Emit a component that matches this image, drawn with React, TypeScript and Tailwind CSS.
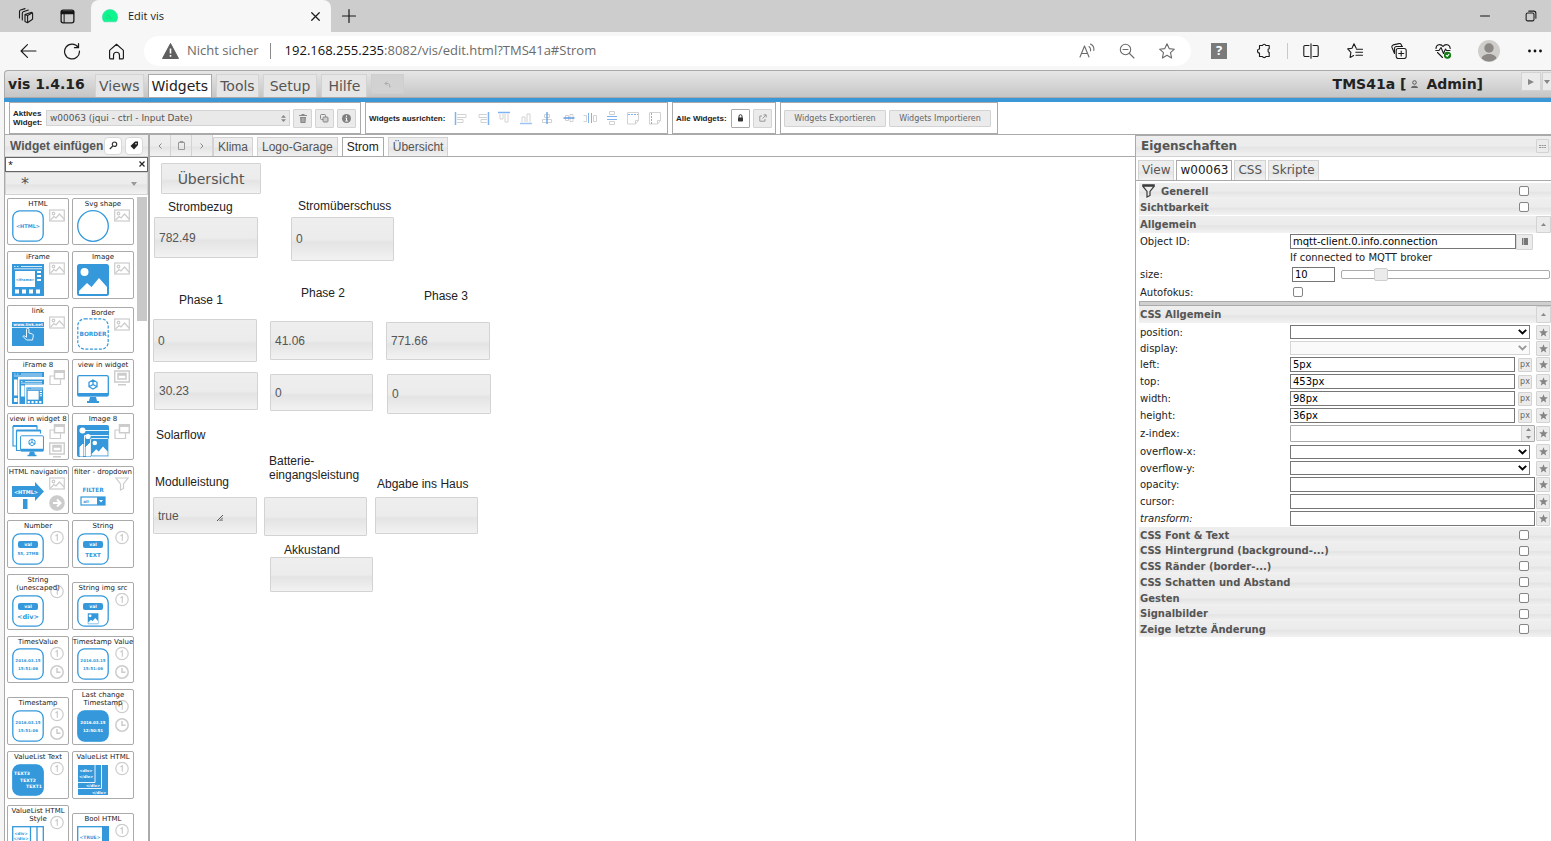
import type { ReactNode } from 'react';
import clsx from 'clsx';

const VERDANA = "font-['DejaVu_Sans',Verdana,sans-serif]";
const ARIAL = "font-['Liberation_Sans',Arial,sans-serif]";
const GLASS = 'bg-[linear-gradient(to_bottom,#eeeeee_0%,#ececec_50%,#e4e4e4_58%,#f2f2f2_100%)]';
const BLUE = '#3498db';
const GREY = '#cccccc';

/* ---------- browser chrome ---------- */

function Ico({ children, size = 16, className, stroke = '#1b1b1b', w = 1.1 }: {
  children: ReactNode; size?: number; className?: string; stroke?: string; w?: number;
}) {
  return (
    <svg width={size} height={size} viewBox="0 0 16 16" fill="none" stroke={stroke} strokeWidth={w}
      strokeLinecap="round" strokeLinejoin="round" className={clsx('shrink-0', className)} aria-hidden="true">
      {children}
    </svg>
  );
}

function IconButton({ label, className, children }: { label: string; className?: string; children: ReactNode }) {
  return (
    <button type="button" aria-label={label} className={clsx('flex shrink-0 items-center justify-center', className)}>
      {children}
    </button>
  );
}

function TabStrip() {
  return (
    <header className="flex h-8 items-stretch bg-[#cdcdcd]">
      <div className="flex w-[91px] items-center pl-[18px]">
        <IconButton label="Workspaces">
          <Ico>
            <path d="M7 6.500l5.700-2a1.200 1.200 0 0 1 1.900.9v5.200a1.500 1.500 0 0 1-.8 1.200l-4.300 3-2.500-1.200zM7 6.500l2.600 1v7M9.600 7.500l4.800-2.700" />
            <path d="M4.300 12V5.200a1.500 1.500 0 0 1 1-1.400l5-1.700M1.500 10V3.400A1.500 1.500 0 0 1 2.500 2l4.500-1.400" />
          </Ico>
        </IconButton>
        <IconButton label="Tab actions" className="ml-[26px]">
          <Ico size={15}>
            <rect x="1.200" y="1.200" width="13.600" height="13.600" rx="2.200" strokeWidth="1.400" />
            <path d="M1.500 2.500h13v2.600h-13z" fill="#111" stroke="#111" />
            <path d="M4.400 5v9.500" />
          </Ico>
        </IconButton>
      </div>
      <div className="flex w-[240px] items-center rounded-t-lg bg-[#f7f7f7] pl-[11px] pr-[10px]">
        <svg width="16" height="14" viewBox="0 0 16 14" aria-hidden="true">
          <path d="M2 12.800h12a7.600 7.600 0 1 0-12 0z" fill="#0df58d" stroke="#3fd6b0" strokeWidth=".6" />
          <path d="M5.500 5.500l4 4.500M4 8l2 2" stroke="#2cc58c" />
        </svg>
        <span className="ml-[10px] text-[11px] text-[#1b1b1b]">Edit vis</span>
        <IconButton label="Close tab" className="ml-auto">
          <Ico size={11} w={1.800}><path d="M2.500 2.500l11 11M13.500 2.500l-11 11" /></Ico>
        </IconButton>
      </div>
      <IconButton label="New tab" className="ml-[10px]">
        <Ico w={1.200}><path d="M8 1.500v13M1.500 8h13" /></Ico>
      </IconButton>
      <IconButton label="Minimize" className="ml-auto">
        <Ico size={12} w={1.400}><path d="M1.500 8h13" strokeLinecap="butt" /></Ico>
      </IconButton>
      <IconButton label="Restore" className="ml-[34px] mr-[14px]">
        <Ico size={12} w={1.400}>
          <rect x="1.500" y="4" width="10.500" height="10.500" rx="2" />
          <path d="M5 1.500h6.500a3 3 0 0 1 3 3V11" />
        </Ico>
      </IconButton>
    </header>
  );
}

function AddressBar() {
  return (
    <div className="flex h-[38px] items-center bg-[#f7f7f7] pl-5 pr-2">
      <IconButton label="Back"><Ico size={17}><path d="M15 7.500H1M7 1.500l-6 6 6 6" /></Ico></IconButton>
      <IconButton label="Reload" className="ml-[26px]">
        <Ico size={18}><path d="M13.500 4.800A6.600 6.600 0 1 0 14.600 8M13.800 1.500v3.600h-3.600" /></Ico>
      </IconButton>
      <IconButton label="Home" className="ml-[27px]">
        <Ico size={17}><path d="M1.500 7L8 1.200 14.500 7v7a1 1 0 0 1-1 1h-2.700v-3.500a2.800 2.800 0 0 0-5.600 0V15H2.500a1 1 0 0 1-1-1z" /></Ico>
      </IconButton>
      <div className="ml-[19px] flex h-[30px] min-w-0 flex-1 items-center rounded-full bg-white pl-[18px] pr-4">
        <svg width="17" height="16" viewBox="0 0 17 16" aria-hidden="true">
          <path d="M8.500.5L16.500 15.500H.5z" fill="#5f5f5f" stroke="#5f5f5f" strokeLinejoin="round" />
          <path d="M8.500 5.500v5M8.500 12v1.700" stroke="#fff" strokeWidth="1.600" />
        </svg>
        <span className="ml-2 whitespace-nowrap text-[13px] text-[#6b6b6b]">Nicht sicher</span>
        <span className="ml-[11px] mr-[14px] h-4 w-px bg-[#8a8a8a]" />
        <span className="whitespace-nowrap text-[13px] text-[#111]">
          192.168.255.235<span className="text-[#6b6b6b]">:8082/vis/edit.html?TMS41a#Strom</span>
        </span>
        <div className="ml-auto flex items-center gap-6">
          <IconButton label="Read aloud">
            <Ico stroke="#6b6b6b">
              <path d="M1 14L5.500 3 10 14M2.600 10.500h5.800M10 3.500q2 1.500 1.500 4.500M11.500 1q4 2 3.300 6.500" />
            </Ico>
          </IconButton>
          <IconButton label="Zoom out">
            <Ico stroke="#6b6b6b"><circle cx="6.500" cy="6.500" r="5.200" /><path d="M4 6.500h5M10.500 10.500L15 15" /></Ico>
          </IconButton>
          <IconButton label="Favourite">
            <Ico stroke="#6b6b6b"><path d="M8 .8l2.200 4.800 5.200.6-3.900 3.500 1.100 5.200L8 12.300l-4.600 2.600 1.100-5.200L.6 6.200l5.200-.6z" /></Ico>
          </IconButton>
        </div>
      </div>
      <IconButton label="Help" className="ml-5 size-4 bg-[#7a7a7a] text-[13px] font-bold text-white">?</IconButton>
      <IconButton label="Extensions" className="ml-[29px]">
        <Ico><path d="M3.500 2.500h3a1.800 1.800 0 0 1 3.400 0h3.300v3.200a1.200 1.200 0 0 0-1 1.800 1.200 1.200 0 0 0 1 1.800v4.200H10a2 2 0 0 1-3.600 0H3.500V10A2 2 0 0 1 3.500 6z" /></Ico>
      </IconButton>
      <span className="ml-[15px] h-4 w-px bg-[#c9c9c9]" />
      <IconButton label="Split screen" className="ml-[15px]">
        <Ico><path d="M6 2.500H2a1.200 1.200 0 0 0-1.200 1.200v8.600A1.200 1.200 0 0 0 2 13.500h4M10 2.500h4a1.200 1.200 0 0 1 1.200 1.200v8.600a1.200 1.200 0 0 1-1.200 1.200h-4M8 .8v14.400" /></Ico>
      </IconButton>
      <IconButton label="Favourites" className="ml-7">
        <Ico><path d="M9.200 5.200L7 .8 5 5.200.7 5.900l3.200 3.500-.8 5 3.500-1.900M9.500 6.300h6M8.800 9.300h6.700M9 12.300h6.500" /></Ico>
      </IconButton>
      <IconButton label="Collections" className="ml-7">
        <Ico>
          <rect x="5.200" y="5.500" width="10" height="10" rx="2" />
          <path d="M10.200 8v5M7.700 10.500h5M3.500 10.500L1 4.500a2 2 0 0 1 1.200-2.600L8 .6a2 2 0 0 1 2.300 1.200l.5 1.200M3.500 10V5.500a2 2 0 0 1 2-2h6" />
        </Ico>
      </IconButton>
      <IconButton label="Browser essentials" className="ml-7">
        <Ico>
          <path d="M1 5.500C1 1 6 .5 8 3.500c2-3 7-2.500 7.200 2M2.500 9.500l5 5M.8 7.500H4l2-3 2.500 6 2-4.500 1 1.500h3.500" />
          <circle cx="12.500" cy="12.300" r="3" fill="#107c10" stroke="#107c10" />
          <path d="M11.200 12.400l1 1 1.700-2" stroke="#fff" />
        </Ico>
      </IconButton>
      <IconButton label="Profile" className="ml-[27px]">
        <svg width="22" height="22" viewBox="0 0 22 22" aria-hidden="true">
          <circle cx="11" cy="11" r="11" fill="#d0cecb" />
          <circle cx="11" cy="8" r="4.700" fill="#8b8885" />
          <path d="M3.500 18.500c1-6 14-6 15 0a11 11 0 0 1-15 0z" fill="#8b8885" />
        </svg>
      </IconButton>
      <IconButton label="More" className="ml-[27px]">
        <svg width="16" height="16" viewBox="0 0 16 16" fill="#111" aria-hidden="true">
          <circle cx="2.500" cy="8" r="1.400" /><circle cx="8" cy="8" r="1.400" /><circle cx="13.500" cy="8" r="1.400" />
        </svg>
      </IconButton>
    </div>
  );
}

/* ---------- editor menu ---------- */

function MenuTab({ children, active, wide }: { children: ReactNode; active?: boolean; wide?: boolean }) {
  return (
    <button type="button" className={clsx('h-[23px] whitespace-nowrap border border-b-0 text-[14px] leading-[20px]',
      wide ? 'px-[6px]' : 'px-[3px]',
      active ? 'border-[#aaa] bg-white text-[#212121]' : 'border-[#d3d3d3] bg-[#e6e6e6] text-[#555]')}>
      {children}
    </button>
  );
}

function MenuBar() {
  return (
    <nav className={clsx(VERDANA, 'flex h-7 items-end rounded-tl border border-b-[#aaa] border-l-[#aaa] border-r-0 border-t-[#aaa] bg-[linear-gradient(to_bottom,#e6e6e6,#c6c6c6)]')}>
      <span className="w-[90px] shrink-0 self-center pl-[3px] text-[14px] font-bold text-[#222]">vis 1.4.16</span>
      <div className="flex gap-1">
        <MenuTab>Views</MenuTab>
        <MenuTab active>Widgets</MenuTab>
        <MenuTab>Tools</MenuTab>
        <MenuTab wide>Setup</MenuTab>
        <MenuTab wide>Hilfe</MenuTab>
        <button type="button" aria-label="Undo" className="mb-[3px] flex h-5 w-[33px] items-center justify-center self-end border border-[#cfcfcf] bg-[#d2d2d2]">
          <svg width="7" height="7" viewBox="0 0 7 7" fill="none" stroke="#aaa" aria-hidden="true"><path d="M3 .5L1 2.500l2 2M1 2.500h3q2 0 2 4" /></svg>
        </button>
      </div>
      <span className="ml-auto flex items-center self-center text-[14px] font-bold text-[#222]">
        TMS41a [
        <svg width="9" height="9" viewBox="0 0 9 9" className="mx-1" aria-hidden="true">
          <circle cx="4.500" cy="2.500" r="1.800" fill="none" stroke="#555" /><path d="M1 8c0-3 7-3 7 0z" fill="#666" />
        </svg>
        <span className="ml-[3px]">Admin]</span>
      </span>
      <div className="ml-[38px] flex gap-px self-start pt-px">
        <button type="button" aria-label="Start" className="flex h-[19px] w-5 items-center justify-center border border-[#d3d3d3] bg-[#ebebeb] text-[#888]">
          <svg width="6" height="6" viewBox="0 0 6 6" fill="#888" aria-hidden="true"><path d="M0 0l6 3-6 3z" /></svg>
        </button>
        <button type="button" aria-label="Choose start" className="flex h-[19px] w-[9px] items-center justify-center border border-r-0 border-[#d3d3d3] bg-[#ebebeb]">
          <svg width="6" height="4" viewBox="0 0 6 4" fill="#888" aria-hidden="true"><path d="M0 0h6L3 4z" /></svg>
        </button>
      </div>
    </nav>
  );
}

/* ---------- widget toolbar ---------- */

const ALIGN: { label: string; art: ReactNode }[] = [
  { label: 'left', art: <><path d="M1.500 1v13" stroke="#7fb2f0" strokeWidth="1.500" /><path d="M3 3.500h9v3H3M3 8.500h6v3H3" /></> },
  { label: 'right', art: <><path d="M12.500 1v13" stroke="#7fb2f0" strokeWidth="1.500" /><path d="M11 3.500H3v3h8M11 8.500H5v3h6" /></> },
  { label: 'top', art: <><path d="M1 1.500h12" stroke="#7fb2f0" strokeWidth="1.500" /><path d="M3 3v5h3V3M8 3v8h3V3" /></> },
  { label: 'bottom', art: <><path d="M1 12.500h12" stroke="#9cc3f3" strokeWidth="1.500" /><path d="M3 11V6h3v5M8 11V3h3v8" /></> },
  { label: 'centre vertical', art: <><path d="M4.500 3.500h5v3h-5zM2.500 8.500h9v3h-9z" /><path d="M7 1v12" stroke="#5f9be6" strokeWidth="1.300" /></> },
  { label: 'centre horizontal', art: <><path d="M3.500 4.500h3v5h-3zM8 3.500h3v7H8z" /><path d="M1.500 7h11" stroke="#5f9be6" strokeWidth="1.500" /></> },
  { label: 'distribute horizontal', art: <><path d="M.5 4.500h3v6h-3M13.500 4.500h-3v6h3z" /><path d="M5.500 2v10M8.500 2v10" stroke="#7fb2f0" /></> },
  { label: 'distribute vertical', art: <><path d="M4.500.5h5v3h-5zM4.500 10.500h5v3h-5z" /><path d="M2 5.500h10M2 8.500h10" stroke="#7fb2f0" /></> },
  { label: 'same width', art: <><path d="M1.500 1.500h11v8l-3 3.500h-8zM9.500 13V9.500h3" /><path d="M2 3.500h10" stroke="#7fb2f0" strokeDasharray="2 1" /></> },
  { label: 'same height', art: <><path d="M1.500 1.500h11v8l-3 3.500h-8zM9.500 13V9.500h3" /><path d="M3.500 2v11" stroke="#7fb2f0" strokeDasharray="2 1" /></> },
];

function ToolButton({ label, children, white }: { label: string; children: ReactNode; white?: boolean }) {
  return (
    <button type="button" aria-label={label} className={clsx('flex h-[19px] w-[19px] shrink-0 items-center justify-center rounded-[1px] border',
      white ? 'border-[#aaa] bg-white' : 'border-[#d3d3d3] bg-[#ebebeb]')}>
      {children}
    </button>
  );
}

function WidgetToolbar() {
  const group = 'flex items-center border border-[#aaa]';
  const caption = clsx(ARIAL, 'text-[8px] font-bold leading-[9px] text-[#222]');
  const wide = 'h-[17px] rounded-[1px] border border-[#d3d3d3] bg-[#ebebeb] text-[8px] leading-[15px] text-[#666] whitespace-nowrap w-[102px]';
  return (
    <div className={clsx(VERDANA, 'flex h-8 gap-1 border-l border-[#aaa] bg-white pl-1')}>
      <div className={clsx(group, 'w-[352px] pl-[3px]')}>
        <label htmlFor="active-widget" className={clsx(caption, 'w-[33px]')}>Aktives Widget:</label>
        <div className="relative flex w-[244px]">
          <select id="active-widget" className="h-4 w-full appearance-none border border-[#d3d3d3] bg-[#e9e9e9] pl-[3px] text-[9px] leading-[14px] text-[#555]">
            <option>w00063 (jqui - ctrl - Input Date)</option>
          </select>
          <svg width="5" height="7" viewBox="0 0 5 7" fill="#888" className="pointer-events-none absolute right-[4px] top-[5px]" aria-hidden="true">
            <path d="M0 2.800L2.500 0 5 2.800zM0 4.200h5L2.500 7z" />
          </svg>
        </div>
        <div className="ml-[3px] flex gap-[3px]">
          <ToolButton label="Delete widget">
            <svg width="8" height="9" viewBox="0 0 8 9" fill="#888" aria-hidden="true"><path d="M0 1h2.500V0h3v1H8v1H0zM1 3h6l-.5 6h-5z" /><path d="M3.200 4v4M4.900 4v4" stroke="#ddd" strokeWidth=".6" /></svg>
          </ToolButton>
          <ToolButton label="Copy widget">
            <svg width="9" height="9" viewBox="0 0 9 9" fill="none" stroke="#888" aria-hidden="true"><rect x=".5" y=".5" width="5" height="5" rx="1" /><rect x="3" y="3" width="5" height="5" rx="1" fill="#ccc" /></svg>
          </ToolButton>
          <ToolButton label="About widget">
            <svg width="9" height="9" viewBox="0 0 9 9" aria-hidden="true"><circle cx="4.500" cy="4.500" r="4.500" fill="#808080" /><path d="M4.500 1.500v1.300M3.500 4h1v2.800M3.300 7h2.600" stroke="#fff" fill="none" /></svg>
          </ToolButton>
        </div>
      </div>
      <div className={clsx(group, 'w-[303px] pl-[3px]')}>
        <span className={clsx(caption, 'w-[85px] whitespace-nowrap')}>Widgets ausrichten:</span>
        <div className="flex flex-1 justify-between pr-[5px]">
          {ALIGN.map((a) => (
            <button key={a.label} type="button" aria-label={`Align ${a.label}`}>
              <svg width="14" height="14" viewBox="0 0 14 14" fill="none" stroke="#d2d2d2" aria-hidden="true">{a.art}</svg>
            </button>
          ))}
        </div>
      </div>
      <div className={clsx(group, 'w-[104px] gap-[3px] pl-[3px]')}>
        <span className={clsx(caption, 'w-[52px] whitespace-nowrap')}>Alle Widgets:</span>
        <ToolButton label="Lock" white>
          <svg width="7" height="8" viewBox="0 0 7 8" aria-hidden="true"><path d="M2 4V2.200a1.500 1.500 0 0 1 3 0V4" fill="none" stroke="#333" /><rect x="1" y="3.600" width="5" height="4" rx=".8" fill="#333" /></svg>
        </ToolButton>
        <ToolButton label="Open in window">
          <svg width="8" height="8" viewBox="0 0 8 8" fill="none" stroke="#999" aria-hidden="true"><path d="M3 2H.8v5.200H6V5M4.500.8H7.200V3.500M7 1L3.500 4.500" /></svg>
        </ToolButton>
      </div>
      <div className={clsx(group, 'w-[218px] gap-[3px] pl-[3px]')}>
        <button type="button" className={wide}>Widgets Exportieren</button>
        <button type="button" className={wide}>Widgets Importieren</button>
      </div>
    </div>
  );
}

/* ---------- palette drawings ---------- */

function T({ x, y, s, children, fill = BLUE }: { x: number; y: number; s: number; children: string; fill?: string }) {
  return (
    <text x={x} y={y} fontSize={s} fill={fill} textAnchor="middle" fontWeight="bold" className={VERDANA}>{children}</text>
  );
}

const Frame = ({ fill = 'white' }: { fill?: string }) => (
  <rect x=".8" y=".8" width="30.400" height="30.400" rx="7" fill={fill} stroke={BLUE} strokeWidth="1.300" />
);
const Val = () => (
  <>
    <Frame />
    <rect x="6" y="8" width="20" height="7" rx="2" fill={BLUE} />
    <T x={16} y={13} s={4.500} fill="white">val</T>
  </>
);
const Stamp = ({ solid }: { solid?: boolean }) => (
  <>
    <Frame fill={solid ? BLUE : 'white'} />
    <T x={16} y={14} s={4} fill={solid ? 'white' : BLUE}>2016.03.15</T>
    <T x={16} y={21.500} s={4} fill={solid ? 'white' : BLUE}>{solid ? '12:50:51' : '15:51:06'}</T>
  </>
);
const Browser = ({ x = 0, y = 0, k = 1 }: { x?: number; y?: number; k?: number }) => (
  <g transform={`translate(${x} ${y}) scale(${k})`}>
    <rect width="32" height="32" fill={BLUE} stroke="white" strokeWidth={k < 1 ? 1.500 : 0} />
    <path d="M2 2.500h1.500M5 2.500h1.500M9 2.500h21M2 4.800h28" stroke="white" strokeWidth=".8" />
    <rect x="3" y="7" width="20" height="16" fill="white" />
    <path d="M25 8h4M25 12h4M25 16h4" stroke="white" strokeWidth="2" />
    <path d="M3 25.500h4v4H3zM10 25.500h4v4h-4zM17 25.500h4v4h-4zM24 25.500h4v4h-4z" fill="white" />
  </g>
);
const Screen = ({ x = 0, y = 0, k = 1 }: { x?: number; y?: number; k?: number }) => (
  <g transform={`translate(${x} ${y}) scale(${k})`}>
    <rect x=".7" y="3.700" width="30.600" height="20" rx="1.500" fill="white" stroke={BLUE} strokeWidth="1.300" />
    <path d="M.5 21h31v2.500a1 1 0 0 1-1 1h-29a1 1 0 0 1-1-1zM13 25h6l1 4h2v2H10v-2h2z" fill={BLUE} />
    <path d="M16 8l4 2.300v4.400L16 17l-4-2.300v-4.400zM16 8v4.500l-4 2.200M16 12.500l4 2.200" fill="none" stroke={BLUE} strokeWidth="1.300" />
  </g>
);
const Picture = ({ x = 0, y = 0, k = 1 }: { x?: number; y?: number; k?: number }) => (
  <g transform={`translate(${x} ${y}) scale(${k})`}>
    <rect width="32" height="32" rx="2.500" fill={BLUE} stroke="white" strokeWidth={k < 1 ? 1.500 : 0} />
    <circle cx="7.500" cy="8" r="4" fill="white" />
    <path d="M2 30V27l8-8 4.500 4L22 14l8 9v7z" fill="white" />
  </g>
);

const ART: Record<string, ReactNode> = {
  html: <><Frame /><T x={16} y={18} s={5}>{'<HTML>'}</T></>,
  svg: <circle cx="16" cy="16" r="15.300" fill="white" stroke={BLUE} strokeWidth="1.300" />,
  iframe: <><Browser /><T x={13} y={16.500} s={3.600}>{'<iframe>'}</T></>,
  image: <Picture />,
  link: <>
    <rect y="4" width="32" height="24" fill={BLUE} /><path d="M0 9.500h32" stroke="white" strokeWidth=".8" />
    <T x={16} y={8.300} s={4} fill="white">www.link.net</T>
    <path d="M14.500 18v-6.500a1.200 1.200 0 0 1 2.400 0V15l3.600 1q1 .5.800 2l-.8 4h-6L11 18.500q.5-1.800 3.500.8z" fill={BLUE} stroke="white" strokeWidth=".9" />
  </>,
  border: <><rect x=".8" y=".8" width="30.400" height="30.400" rx="7" fill="white" stroke={BLUE} strokeWidth="1.200" strokeDasharray="3 1.500" /><T x={16} y={18} s={5.800}>BORDER</T></>,
  iframe8: <>
    <path d="M0 0h32v5H6v27H0z" fill={BLUE} /><path d="M2 2h1.500M5 2h1.500M9 2h21M2 4h28" stroke="white" strokeWidth=".7" />
    <path d="M2 7.500h3.500v16H2zM2 26h3.500v4H2z" fill="white" />
    <path d="M7.500 7.500H32v5H13V32H7.500z" fill={BLUE} /><path d="M9 9.500h1.500M13 9.500h17M9 11.200h21" stroke="white" strokeWidth=".7" />
    <path d="M9 13.500h3.500v11H9z" fill="white" />
    <Browser x={14} y={15} k={0.550} />
  </>,
  view: <Screen />,
  view8: <>
    <path d="M1 1h24v3.500M1 1v20h3M4.500 5.500h24v3M4.500 5.500v20H8" fill="none" stroke={BLUE} strokeWidth="1.200" />
    <path d="M1 1h24M4.500 5.500h24" stroke={BLUE} strokeWidth="2" /><Screen x={8} y={8} k={0.750} />
  </>,
  image8: <>
    <rect width="32" height="32" rx="2" fill={BLUE} />
    <circle cx="5.500" cy="5.500" r="3" fill="white" /><path d="M5.500 5.500h26M3 31V22l3-3v12z" stroke="white" strokeWidth=".9" fill="white" />
    <circle cx="11" cy="11.500" r="2.600" fill="white" /><path d="M7.500 31V10.500h24M9 31v-9l4-4v13z" stroke="white" strokeWidth=".9" fill="none" /><path d="M9 31v-9l4-4v13z" fill="white" />
    <Picture x={13.500} y={13.500} k={0.570} />
  </>,
  nav: <><path d="M0 7h23V3l9 9.500L23 22v-4H0z" fill={BLUE} /><path d="M11 20h4.500v10H11z" fill={BLUE} /><T x={14} y={14.500} s={5} fill="white">{'<HTML>'}</T></>,
  filter: <><T x={16} y={13} s={5.800}>FILTER</T><rect x="4" y="18" width="24" height="8" fill="white" stroke={BLUE} strokeWidth="1.200" /><T x={9} y={24} s={4}>all</T><rect x="20" y="18" width="8" height="8" fill={BLUE} /><path d="M22 21h4l-2 2.500z" fill="white" /></>,
  number: <><Val /><T x={16} y={22} s={4}>55, 27MB</T></>,
  string: <><Val /><T x={16} y={23.500} s={5.500}>TEXT</T></>,
  unescaped: <><Val /><T x={16} y={24} s={6.500}>{'<div>'}</T></>,
  imgsrc: <><Val /><Picture x={10.500} y={18} k={0.350} /></>,
  stamp: <Stamp />,
  stampSolid: <Stamp solid />,
  list: <><Frame fill={BLUE} /><T x={10} y={11} s={4.500} fill="white">TEXT3</T><T x={16} y={17.500} s={4.500} fill="white">TEXT2</T><T x={22} y={24} s={4.500} fill="white">TEXT1</T></>,
  listHtml: <>
    <rect x="1" y="1" width="30" height="30" fill={BLUE} /><path d="M1 24.500h23.500V1M1 18.500h17V1" fill="none" stroke="white" strokeWidth=".9" />
    <T x={9} y={8} s={3.800} fill="white">{'<div>'}</T><T x={9} y={13.500} s={3.800} fill="white">{'</div>'}</T><T x={16} y={23} s={3.800} fill="white">{'</div>'}</T><T x={22} y={29.500} s={3.800} fill="white">{'</div>'}</T>
  </>,
  listStyle: <>
    <rect x=".7" y=".7" width="30.600" height="30" fill="white" stroke={BLUE} strokeWidth="1.300" /><path d="M18.500 1v30M25 1v30" stroke={BLUE} strokeWidth="1.300" />
    <T x={9} y={8.500} s={4}>{'<div>'}</T><T x={9} y={14} s={4}>{'</div>'}</T>
  </>,
  bool: <><rect x=".7" y=".7" width="30.600" height="30" fill="white" stroke={BLUE} strokeWidth="1.300" /><rect x="25" width="7" height="32" fill={BLUE} /><T x={13} y={12.500} s={4.500}>{'<TRUE>'}</T></>,
};

const SIDE: Record<string, ReactNode> = {
  img: <><rect x=".7" y="1" width="14.600" height="11" /><circle cx="4.500" cy="4.500" r="1.300" /><path d="M1.500 11l3.500-3.500 2 1.500 3.500-4 5 5.500" /></>,
  win: <><path d="M5.500.8h9.800v8H5.500zM5.500 2.300h9.800" strokeWidth="1.500" /><path d="M5 6H1v8.500h10.500V9.500" /></>,
  mon: <><rect x=".7" y="1" width="14.600" height="11" strokeWidth="1.500" /><path d="M4 3.500h8v5.500H4zM4 5h8M4 14.800h8" strokeWidth="1.500" /></>,
  arrow: <><circle cx="8" cy="8" r="7.200" fill={GREY} /><path d="M4 8h7M8 4.500L11.500 8 8 11.500" stroke="white" strokeWidth="2" /></>,
  flt: <path d="M2 1h12L9.500 7v4.500l-3 1.500V7z" />,
  one: <><circle cx="8" cy="6.500" r="6.200" /><path d="M6.500 5l1.800-1.300v6" /></>,
  clock: <><circle cx="8" cy="7" r="6.200" strokeWidth="1.500" /><path d="M8 3v4.200h3.500" strokeWidth="1.500" /></>,
};

const H46 = 'h-[46px]';
const H47 = 'h-[47px]';
const H48 = 'h-[48px]';
const H56 = 'h-[56px]';

const TILES: [title: string, art: string, side: string[], height: string][] = [
  ['HTML', 'html', ['img'], H47], ['Svg shape', 'svg', ['img'], H47],
  ['iFrame', 'iframe', ['img'], H48], ['Image', 'image', ['img'], H48],
  ['link', 'link', ['img'], H48], ['Border', 'border', ['img'], H46],
  ['iFrame 8', 'iframe8', ['win'], H48], ['view in widget', 'view', ['mon'], H48],
  ['view in widget 8', 'view8', ['win', 'mon'], H47], ['Image 8', 'image8', ['win'], H47],
  ['HTML navigation', 'nav', ['img', 'arrow'], H48], ['filter - dropdown', 'filter', ['flt'], H48],
  ['Number', 'number', ['one'], H48], ['String', 'string', ['one'], H48],
  ['String\n(unescaped)', 'unescaped', ['one'], H56], ['String img src', 'imgsrc', ['one'], H48],
  ['TimesValue', 'stamp', ['one', 'clock'], H47], ['Timestamp Value', 'stamp', ['one', 'clock'], H47],
  ['Timestamp', 'stamp', ['one', 'clock'], H48], ['Last change\nTimestamp', 'stampSolid', ['one', 'clock'], H56],
  ['ValueList Text', 'list', ['one'], H48], ['ValueList HTML', 'listHtml', ['one'], H48],
  ['ValueList HTML\nStyle', 'listStyle', ['one'], H56], ['Bool HTML', 'bool', ['one'], H48],
];

function Palette() {
  return (
    <aside className="flex w-[146px] shrink-0 flex-col border-l border-r-2 border-[#aaa] bg-white">
      <div className={clsx(GLASS, ARIAL, 'flex h-[22px] shrink-0 items-center border-b border-[#d0d0d0] pl-[5px]')}>
        <h2 className="whitespace-nowrap text-[12px] font-bold text-[#555]">Widget einfügen</h2>
        <div className="ml-auto flex gap-[3px] pr-[5px]">
          <button type="button" aria-label="Find widget" className="flex size-[18px] items-center justify-center rounded-[4px] border border-[#d8d8d8] bg-white">
            <svg width="9" height="9" viewBox="0 0 9 9" fill="none" stroke="#333" strokeWidth="1.200" aria-hidden="true"><circle cx="5.500" cy="3.200" r="2.200" /><path d="M3.800 5L.8 8" /></svg>
          </button>
          <button type="button" aria-label="Tag" className="flex size-[18px] items-center justify-center rounded-[4px] border border-[#d8d8d8] bg-white">
            <svg width="9" height="9" viewBox="0 0 9 9" fill="#222" aria-hidden="true"><path d="M5 .5h3v3.500L4 8.500.5 5z" /><circle cx="6" cy="2.800" r=".8" fill="#fff" /></svg>
          </button>
        </div>
      </div>
      <div className="relative flex shrink-0">
        <input aria-label="Filter" defaultValue="*" className="h-[15px] w-full border border-[#666] px-[2px] text-[9px] leading-[13px] text-black outline-none" />
        <button type="button" aria-label="Clear filter" className="absolute right-[3px] top-[4px]">
          <svg width="6" height="6" viewBox="0 0 6 6" stroke="#222" strokeWidth="1.200" className="block" aria-hidden="true"><path d="M.5.5l5 5M5.500.5l-5 5" /></svg>
        </button>
      </div>
      <div className="relative flex shrink-0">
        <select aria-label="Widget set" className={clsx(GLASS, VERDANA, 'h-[23px] w-full appearance-none border border-[#d3d3d3] pl-[15px] text-[16px] leading-[21px] text-[#555]')}>
          <option>*</option>
        </select>
        <svg width="6" height="4" viewBox="0 0 6 4" fill="#999" className="pointer-events-none absolute right-[11px] top-[10px]" aria-hidden="true"><path d="M0 0h6L3 4z" /></svg>
      </div>
      <div className="flex min-h-0 flex-1 overflow-hidden pl-[2px]">
        <ul className={clsx(VERDANA, 'grid auto-rows-max grid-cols-[62px_62px] items-end gap-x-[3px] gap-y-[6px] pt-[3px]')}>
          {TILES.map(([title, art, side, height]) => (
            <li key={title} className={clsx(height, 'relative flex flex-col items-start justify-between rounded-[2px] border border-[#aaa] bg-white pb-[2px]')}>
              <span className="relative z-10 flex w-full justify-center whitespace-pre pt-px text-center text-[7px] leading-[8px] text-[#222]">{title}</span>
              <svg width="32" height="32" viewBox="0 0 32 32" className="ml-1 shrink-0" aria-hidden="true">{ART[art]}</svg>
              <span className="absolute right-[3px] top-[10px] flex flex-col gap-[2px]">
                {side.map((s) => (
                  <svg key={s} width="16" height="16" viewBox="0 0 16 16" fill="none" stroke={GREY} strokeWidth="1.200" aria-hidden="true">{SIDE[s]}</svg>
                ))}
              </span>
            </li>
          ))}
        </ul>
        <div className="ml-[3px] mt-[2px] h-[124px] w-[10px] bg-[#c8c8c8]" />
      </div>
    </aside>
  );
}

/* ---------- canvas ---------- */

const LABELS: [text: string, place: string][] = [
  ['Strombezug', 'left-[18px] top-[43px]'],
  ['Stromüberschuss', 'left-[148px] top-[42px]'],
  ['Phase 1', 'left-[29px] top-[136px]'],
  ['Phase 2', 'left-[151px] top-[129px]'],
  ['Phase 3', 'left-[274px] top-[132px]'],
  ['Solarflow', 'left-[6px] top-[271px]'],
  ['Batterie-\neingangsleistung', 'left-[119px] top-[297px]'],
  ['Modulleistung', 'left-[5px] top-[318px]'],
  ['Abgabe ins Haus', 'left-[227px] top-[320px]'],
  ['Akkustand', 'left-[134px] top-[386px]'],
];

const FIELDS: [name: string, value: string, place: string][] = [
  ['Strombezug', '782.49', 'left-[4px] top-[60px] w-[104px] h-[41px]'],
  ['Stromüberschuss', '0', 'left-[141px] top-[60px] w-[103px] h-[44px]'],
  ['Phase 1', '0', 'left-[3px] top-[162px] w-[104px] h-[43px]'],
  ['Phase 2', '41.06', 'left-[120px] top-[164px] w-[103px] h-[39px]'],
  ['Phase 3', '771.66', 'left-[236px] top-[165px] w-[104px] h-[38px]'],
  ['Phase 1 Wert', '30.23', 'left-[4px] top-[215px] w-[104px] h-[38px]'],
  ['Phase 2 Wert', '0', 'left-[120px] top-[217px] w-[103px] h-[37px]'],
  ['Phase 3 Wert', '0', 'left-[237px] top-[217px] w-[104px] h-[40px]'],
  ['Modulleistung', 'true', 'left-[3px] top-[340px] w-[104px] h-[37px]'],
  ['Batterieeingangsleistung', '', 'left-[114px] top-[340px] w-[103px] h-[39px]'],
  ['Abgabe ins Haus', '', 'left-[225px] top-[340px] w-[103px] h-[37px]'],
  ['Akkustand', '', 'left-[120px] top-[400px] w-[103px] h-[35px]'],
];

function ViewTab({ children, active }: { children: ReactNode; active?: boolean }) {
  return (
    <button type="button" className={clsx('h-[19px] whitespace-nowrap border border-b-0 px-1 text-[12px] leading-[17px]',
      active ? 'border-[#aaa] bg-white text-[#212121]' : clsx(GLASS, 'border-[#d3d3d3] text-[#555]'))}>
      {children}
    </button>
  );
}

function Canvas() {
  const nav = clsx(GLASS, 'flex h-[21px] w-[21px] items-center justify-center border-r border-[#d3d3d3]');
  return (
    <main className={clsx(ARIAL, 'flex min-w-0 flex-1 flex-col bg-white')}>
      <div className="flex h-[22px] shrink-0 items-end border-b border-[#aaa]">
        <button type="button" aria-label="Previous view" className={nav}>
          <svg width="4" height="6" viewBox="0 0 4 6" fill="none" stroke="#888" aria-hidden="true"><path d="M3.500.5L1 3l2.500 2.500" /></svg>
        </button>
        <button type="button" aria-label="View list" className={nav}>
          <svg width="7" height="9" viewBox="0 0 7 9" fill="none" stroke="#999" aria-hidden="true"><path d="M.5 1.500h6v7h-6zM2 1.500v-1h3v1" /></svg>
        </button>
        <button type="button" aria-label="Next view" className={nav}>
          <svg width="4" height="6" viewBox="0 0 4 6" fill="none" stroke="#888" aria-hidden="true"><path d="M.5.5L3 3 .5 5.500" /></svg>
        </button>
        <div className="flex gap-1">
          <ViewTab>Klima</ViewTab>
          <ViewTab>Logo-Garage</ViewTab>
          <ViewTab active>Strom</ViewTab>
          <ViewTab>Übersicht</ViewTab>
        </div>
      </div>
      <div className="relative min-h-0 flex-1 text-[12px] leading-[14px]">
        <button type="button" className={clsx(GLASS, VERDANA, 'absolute left-[11px] top-[6px] h-[31px] w-[100px] rounded-[1px] border border-[#d3d3d3] text-[14px] text-[#555]')}>
          Übersicht
        </button>
        {LABELS.map(([text, place]) => (
          <span key={text} className={clsx('absolute whitespace-pre text-[#222]', place)}>{text}</span>
        ))}
        {FIELDS.map(([name, value, place]) => (
          <input key={name} aria-label={name} defaultValue={value}
            className={clsx(GLASS, 'absolute rounded-[1px] border border-[#d3d3d3] px-1 text-[12px] text-[#555] outline-none', place)} />
        ))}
        <svg width="6" height="6" viewBox="0 0 6 6" fill="none" stroke="#555" className="absolute left-[67px] top-[358px]" aria-hidden="true"><path d="M0 6L6 0M2.500 6L6 2.500M4.500 6L6 4.500" /></svg>
      </div>
    </main>
  );
}

/* ---------- properties ---------- */

const BTN = 'flex shrink-0 items-center justify-center rounded-[1px] border border-[#d3d3d3] bg-[#ebebeb]';

function Arrow({ up }: { up?: boolean }) {
  return (
    <svg width="5" height="3" viewBox="0 0 5 3" fill="#888" aria-hidden="true"><path d={up ? 'M0 3h5L2.500 0z' : 'M0 0h5L2.500 3z'} /></svg>
  );
}

function Section({ title, height = 'h-4', filter, open }: { title: string; height?: string; filter?: boolean; open?: boolean }) {
  return (
    <div className={clsx(GLASS, height, 'ml-[3px] flex items-center pl-px font-bold text-[#555]')}>
      {filter && (
        <svg width="13" height="14" viewBox="0 0 13 14" fill="none" stroke="#3a3a3a" strokeWidth="1.200" className="ml-[2px] mr-[6px] shrink-0" aria-hidden="true">
          <path d="M.8.8h11.400v1.400L8 7.500v4L5 13V7.500L.8 2.200zM1.500 2.200h10" />
        </svg>
      )}
      {open ? (
        <>
          <h3>{title}</h3>
          <button type="button" aria-label={`${title} einklappen`} className={clsx(BTN, 'ml-auto h-[17px] w-[15px]')}><Arrow up /></button>
        </>
      ) : (
        <label className="flex flex-1 items-center justify-between pr-[22px]">
          {title}
          <input type="checkbox" className="size-[10px] appearance-none rounded-[2px] border border-[#858585] bg-white" />
        </label>
      )}
    </div>
  );
}

type Kind = 'select' | 'disabled' | 'px' | 'spin' | 'text';
const CSS_ROWS: [name: string, kind: Kind, value: string, height: string][] = [
  ['position', 'select', '', 'h-4'],
  ['display', 'disabled', '', 'h-4'],
  ['left', 'px', '5px', 'h-[17px]'],
  ['top', 'px', '453px', 'h-[17px]'],
  ['width', 'px', '98px', 'h-[17px]'],
  ['height', 'px', '36px', 'h-[17px]'],
  ['z-index', 'spin', '', 'h-[19px]'],
  ['overflow-x', 'select', '', 'h-[17px]'],
  ['overflow-y', 'select', '', 'h-4'],
  ['opacity', 'text', '', 'h-[17px]'],
  ['cursor', 'text', '', 'h-[17px]'],
  ['transform', 'text', '', 'h-[17px]'],
];

const TEXTBOX = 'h-[15px] min-w-0 border border-[#767676] bg-white px-[2px] text-[10px] leading-[13px] text-black outline-none';

function CssRow({ name, kind, value, height }: { name: string; kind: Kind; value: string; height: string }) {
  const off = kind === 'disabled';
  return (
    <div className={clsx(height, 'flex items-center pl-1')}>
      <label htmlFor={name} className={clsx('w-[150px] shrink-0', name === 'transform' && 'italic')}>{name}:</label>
      <div className="flex min-w-0 flex-1 items-center">
        {(kind === 'select' || off) && (
          <div className="relative mr-[5px] flex flex-1">
            <select id={name} disabled={off} className={clsx('h-[14px] w-full appearance-none border px-1 text-[10px]', off ? 'border-[#d5d5d5] bg-[#fafafa]' : 'border-[#767676] bg-white')}>
              <option> </option>
            </select>
            <svg width="9" height="6" viewBox="0 0 9 6" fill="none" stroke={off ? '#999' : '#000'} strokeWidth="1.900" className="pointer-events-none absolute right-[3px] top-[4px]" aria-hidden="true"><path d="M.8.8l3.700 3.700L8.200.8" /></svg>
          </div>
        )}
        {kind === 'px' && (
          <>
            <input id={name} defaultValue={value} className={clsx(TEXTBOX, 'flex-1')} />
            <button type="button" className={clsx(BTN, 'ml-[3px] mr-[3px] h-[14px] w-[14px] text-[8px] text-[#666]')}>px</button>
          </>
        )}
        {kind === 'text' && <input id={name} defaultValue={value} className={clsx(TEXTBOX, 'flex-1')} />}
        {kind === 'spin' && (
          <div className="flex h-[17px] flex-1 rounded-[1px] border border-[#aaa]">
            <input id={name} defaultValue={value} className="min-w-0 flex-1 text-[10px] outline-none" />
            <span className="flex w-[13px] flex-col">
              <button type="button" aria-label="Increase" className="flex flex-1 items-center justify-center border-l border-[#d3d3d3] bg-[#ebebeb]"><Arrow up /></button>
              <button type="button" aria-label="Decrease" className="flex flex-1 items-center justify-center border-l border-[#d3d3d3] bg-[#ebebeb]"><Arrow /></button>
            </span>
          </div>
        )}
      </div>
      <button type="button" aria-label={`${name} favourite`} className={clsx(BTN, 'ml-px mr-px h-[15px] w-[14px]')}>
        <svg width="9" height="9" viewBox="0 0 10 10" fill="#858585" aria-hidden="true"><path d="M5 .3l1.300 3.200 3.500.2L7.100 6l.9 3.500L5 7.600 2 9.500 2.900 6 .2 3.700l3.500-.2z" /></svg>
      </button>
    </div>
  );
}

function PropTab({ children, active }: { children: ReactNode; active?: boolean }) {
  return (
    <button type="button" className={clsx('h-5 border border-b-0 px-[3px] text-[12px] leading-[19px]',
      active ? 'border-[#aaa] bg-white text-[#212121]' : clsx(GLASS, 'border-[#d3d3d3] text-[#555]'))}>
      {children}
    </button>
  );
}

const CLOSED: [title: string, height: string][] = [
  ['CSS Font & Text', 'h-4'],
  ['CSS Hintergrund (background-...)', 'h-[15px]'],
  ['CSS Ränder (border-...)', 'h-4'],
  ['CSS Schatten und Abstand', 'h-4'],
  ['Gesten', 'h-4'],
  ['Signalbilder', 'h-[15px]'],
  ['Zeige letzte Änderung', 'h-4'],
];

function Properties() {
  return (
    <aside className={clsx(VERDANA, 'flex w-[416px] shrink-0 flex-col border-l border-[#aaa] bg-white text-[10px] leading-[13px] text-[#222]')}>
      <div className={clsx(GLASS, 'flex h-[22px] items-center border-b border-t border-b-[#d0d0d0] border-t-[#aaa] pl-[5px] pr-[2px]')}>
        <h2 className="text-[12px] font-bold text-[#555]">Eigenschaften</h2>
        <button type="button" aria-label="Panel options" className={clsx(BTN, 'ml-auto h-[14px] w-[13px]')}>
          <svg width="7" height="3" viewBox="0 0 7 3" stroke="#999" strokeDasharray="2 .6" aria-hidden="true"><path d="M0 .5h7M0 2.500h7" /></svg>
        </button>
      </div>
      <div className="flex h-6 items-end gap-[2px] border-b border-[#aaa] pl-[2px]">
        <PropTab>View</PropTab>
        <PropTab active>w00063</PropTab>
        <PropTab>CSS</PropTab>
        <PropTab>Skripte</PropTab>
      </div>
      <div className="pt-[2px]">
        <Section title="Generell" filter />
        <Section title="Sichtbarkeit" />
        <Section title="Allgemein" height="mt-px h-[17px]" open />
        <div className="flex h-[17px] items-center pl-1">
          <label htmlFor="oid" className="w-[150px]">Object ID:</label>
          <input id="oid" defaultValue="mqtt-client.0.info.connection" className={clsx(TEXTBOX, 'flex-1')} />
          <button type="button" aria-label="Objekt wählen" className={clsx(BTN, 'mr-[18px] h-4 w-[17px]')}>
            <svg width="6" height="7" viewBox="0 0 6 7" aria-hidden="true"><path d="M0 0h6v7H0z" fill="#777" /><path d="M1.500 0v7" stroke="#bbb" /></svg>
          </button>
        </div>
        <p className="h-4 pl-[154px] leading-[16px]">If connected to MQTT broker</p>
        <div className="flex h-[17px] items-center pl-1">
          <label htmlFor="size" className="w-[152px]">size:</label>
          <input id="size" defaultValue="10" className={clsx(TEXTBOX, 'w-[43px]')} />
          <input type="range" aria-label="size" min={0} max={60} defaultValue={10}
            className="ml-[6px] mr-px h-[9px] min-w-0 flex-1 appearance-none rounded-[2px] border border-[#aaa] bg-white [&::-webkit-slider-thumb]:h-[13px] [&::-webkit-slider-thumb]:w-[14px] [&::-webkit-slider-thumb]:appearance-none [&::-webkit-slider-thumb]:rounded-[2px] [&::-webkit-slider-thumb]:border [&::-webkit-slider-thumb]:border-[#cfcfcf] [&::-webkit-slider-thumb]:bg-[#ebebeb]" />
        </div>
        <div className="flex h-[18px] items-center pl-1">
          <label htmlFor="autofocus" className="w-[153px]">Autofokus:</label>
          <input id="autofocus" type="checkbox" className="size-[10px] appearance-none rounded-[2px] border border-[#858585] bg-white" />
        </div>
        <div className="ml-[3px] h-[5px] border-b border-l border-t border-[#aaa] bg-[#d0d0d0]" />
        <Section title="CSS Allgemein" height="h-[17px]" open />
        <div className="pt-px">
          {CSS_ROWS.map(([name, kind, value, height]) => (
            <CssRow key={name} name={name} kind={kind} value={value} height={height} />
          ))}
        </div>
        {CLOSED.map(([title, height]) => <Section key={title} title={title} height={height} />)}
      </div>
    </aside>
  );
}

export default function App() {
  return (
    <div className="flex h-screen flex-col overflow-hidden bg-[#f5f5f5] font-['Open_Sans','Noto_Sans',sans-serif]">
      <TabStrip />
      <AddressBar />
      <div className="ml-1 flex min-h-0 flex-1 flex-col">
        <MenuBar />
        <div className="h-1 shrink-0 bg-[#3c97d6]" />
        <WidgetToolbar />
        <div className="flex min-h-0 flex-1 border-t border-[#aaa]">
          <Palette />
          <Canvas />
          <Properties />
        </div>
      </div>
    </div>
  );
}
